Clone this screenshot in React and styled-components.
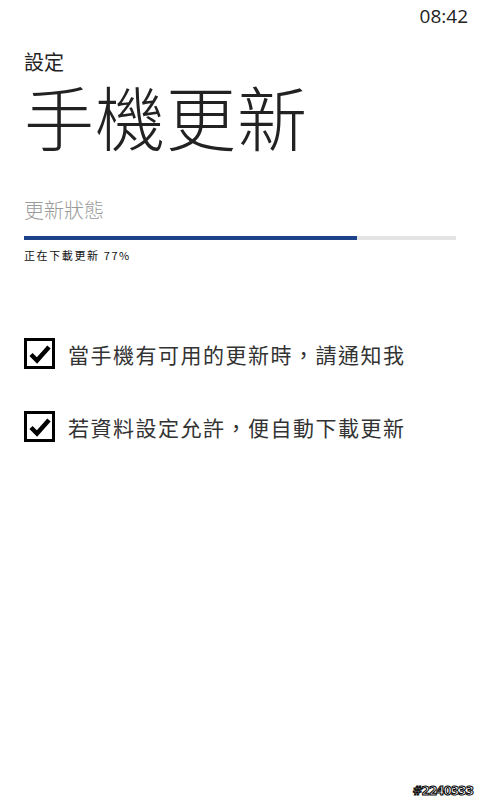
import styled, { createGlobalStyle } from "styled-components";

const GlobalStyle = createGlobalStyle`
  html, body {
    margin: 0;
    padding: 0;
    background: #ffffff;
  }
  body {
    font-family: "Noto Sans CJK TC", "Noto Sans", sans-serif;
    color: #222222;
  }
`;

const Screen = styled.div`
  width: 480px;
  height: 800px;
  background: #ffffff;
  display: flex;
  flex-direction: column;
  position: relative;
  overflow: hidden;
`;

const StatusBar = styled.div`
  height: 32px;
  display: flex;
  justify-content: flex-end;
  align-items: center;
  padding: 0 12px;
`;

const Clock = styled.span`
  font-family: "Open Sans", "Noto Sans", sans-serif;
  font-size: 19px;
  color: #222222;
`;

const Content = styled.div`
  display: flex;
  flex-direction: column;
  padding: 0 24px;
`;

const AppName = styled.h2`
  margin: 16px 0 0;
  font-size: 20px;
  font-weight: 400;
  line-height: 28px;
  color: #222222;
`;

const PageTitle = styled.h1`
  margin: 0;
  font-size: 70px;
  font-weight: 300;
  line-height: 80px;
  letter-spacing: 1px;
  color: #222222;
`;

const SectionLabel = styled.div`
  margin-top: 40px;
  font-size: 20px;
  font-weight: 300;
  line-height: 28px;
  color: #9a9a9a;
`;

const Track = styled.div`
  margin-top: 12px;
  height: 4px;
  width: 432px;
  background: #e4e4e4;
`;

const Fill = styled.div`
  height: 100%;
  background: #1d4289;
`;

const ProgressText = styled.div`
  margin-top: 8px;
  font-size: 11px;
  line-height: 14px;
  letter-spacing: 1.6px;
  color: #111111;
`;

const Options = styled.div`
  margin-top: 76px;
  display: flex;
  flex-direction: column;
  gap: 42px;
`;

const Option = styled.label`
  display: flex;
  align-items: center;
  gap: 13px;
`;

const Box = styled.span`
  width: 25px;
  height: 25px;
  border: 3px solid #000000;
  display: flex;
  align-items: center;
  justify-content: center;
  flex-shrink: 0;
`;

const OptionText = styled.span`
  font-size: 21px;
  line-height: 30px;
  letter-spacing: 1.5px;
  color: #333333;
`;

const Watermark = styled.div`
  position: absolute;
  right: 7px;
  bottom: 2px;
  font-family: "DejaVu Sans", sans-serif;
  font-weight: 700;
  font-size: 12px;
  letter-spacing: -1px;
  color: #ffffff;
  -webkit-text-stroke: 1px #000000;
`;

function Check() {
  return (
    <svg width="22" height="20" viewBox="0 0 22 20">
      <path d="M2 10.5 L8 16.5 L20 3" fill="none" stroke="#000" strokeWidth="4.5" />
    </svg>
  );
}

const options = ["當手機有可用的更新時，請通知我", "若資料設定允許，便自動下載更新"];

export default function App() {
  const progress = 77;
  return (
    <Screen>
      <GlobalStyle />
      <StatusBar>
        <Clock>08:42</Clock>
      </StatusBar>
      <Content>
        <AppName>設定</AppName>
        <PageTitle>手機更新</PageTitle>
        <SectionLabel>更新狀態</SectionLabel>
        <Track>
          <Fill style={{ width: `${progress}%` }} />
        </Track>
        <ProgressText>正在下載更新 {progress}%</ProgressText>
        <Options>
          {options.map((text) => (
            <Option key={text}>
              <Box>
                <Check />
              </Box>
              <OptionText>{text}</OptionText>
            </Option>
          ))}
        </Options>
      </Content>
      <Watermark>#2240333</Watermark>
    </Screen>
  );
}
